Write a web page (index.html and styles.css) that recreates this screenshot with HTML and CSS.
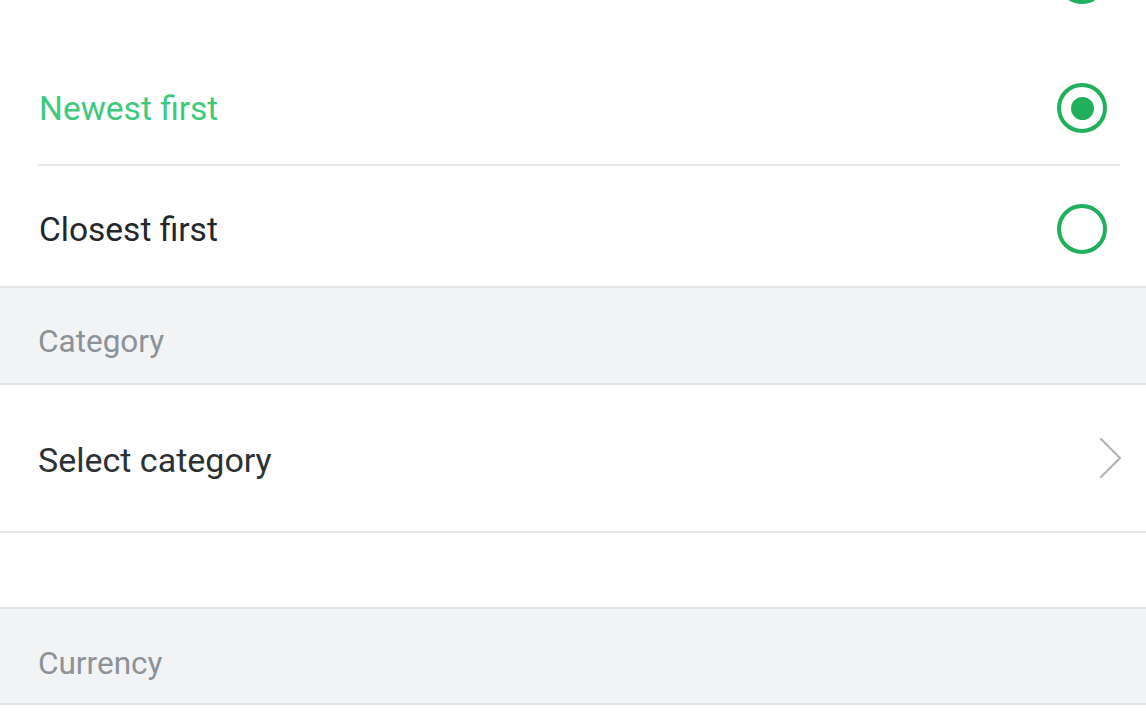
FILE: index.html
```html
<!DOCTYPE html>
<html>
<head>
<meta charset="utf-8">
<link rel="stylesheet" href="styles.css">
</head>
<body>
<div class="page">
  <div class="options">
    <div class="option option-hidden">
      <span class="label">Most relevant</span>
      <span class="radio radio-solid"></span>
    </div>
    <div class="option sep">
      <span class="label label-active">Newest first</span>
      <span class="radio radio-on"></span>
    </div>
    <div class="option">
      <span class="label">Closest first</span>
      <span class="radio"></span>
    </div>
  </div>
  <div class="section">Category</div>
  <div class="nav-row">
    <span class="nav-label">Select category</span>
    <svg class="chevron" width="26" height="44" viewBox="0 0 26 44"><path d="M3 3 L22 22 L3 41" fill="none" stroke="#b4b7ba" stroke-width="2.4" stroke-linecap="round" stroke-linejoin="round"/></svg>
  </div>
  <div class="blank"></div>
  <div class="section section-2">Currency</div>
</div>
</body>
</html>
```

FILE: styles.css
```css
html, body {
  margin: 0;
  padding: 0;
  background: #ffffff;
}
body {
  font-family: Roboto, "Noto Sans", "Liberation Sans", sans-serif;
  overflow: hidden;
}
.page {
  width: 1146px;
  height: 716px;
  overflow: hidden;
  background: #ffffff;
}
.options {
  margin-top: -74px;
}
.option {
  height: 120px;
  margin: 0 26px 0 38px;
  padding-top: 6px;
  display: flex;
  align-items: center;
  justify-content: space-between;
  box-sizing: border-box;
}
.option.sep {
  border-bottom: 2px solid #e6e8ea;
}
.option-hidden {
  align-items: flex-end;
  padding-top: 0;
}
.option-hidden .label {
  visibility: hidden;
}
.label {
  font-size: 33.5px;
  color: #23272b;
  padding-left: 1px;
}
.label-active {
  color: #3fc97c;
}
.radio {
  width: 50px;
  height: 50px;
  box-sizing: border-box;
  border: 4px solid #20b05c;
  border-radius: 50%;
  margin-right: 13px;
  display: flex;
  align-items: center;
  justify-content: center;
}
.radio-on::after {
  content: "";
  width: 23px;
  height: 23px;
  border-radius: 50%;
  background: #20b05c;
}
.radio-solid {
  background: #20b05c;
  margin-bottom: 42px;
}
.section {
  height: 99px;
  box-sizing: border-box;
  background: #f2f3f5;
  border-top: 2px solid #e3e5e8;
  border-bottom: 2px solid #e3e5e8;
  display: flex;
  align-items: center;
  padding-left: 38px;
  padding-top: 12px;
  font-size: 31.5px;
  color: #8c9297;
}
.section-2 {
  height: 98px;
  padding-top: 14px;
}
.nav-row {
  height: 148px;
  box-sizing: border-box;
  border-bottom: 2px solid #e3e5e8;
  display: flex;
  align-items: center;
  justify-content: space-between;
  padding: 4px 22px 0 38px;
}
.nav-label {
  font-size: 34px;
  color: #2c3135;
}
.chevron {
  display: block;
  margin-top: -4px;
}
.blank {
  height: 74px;
}
```
